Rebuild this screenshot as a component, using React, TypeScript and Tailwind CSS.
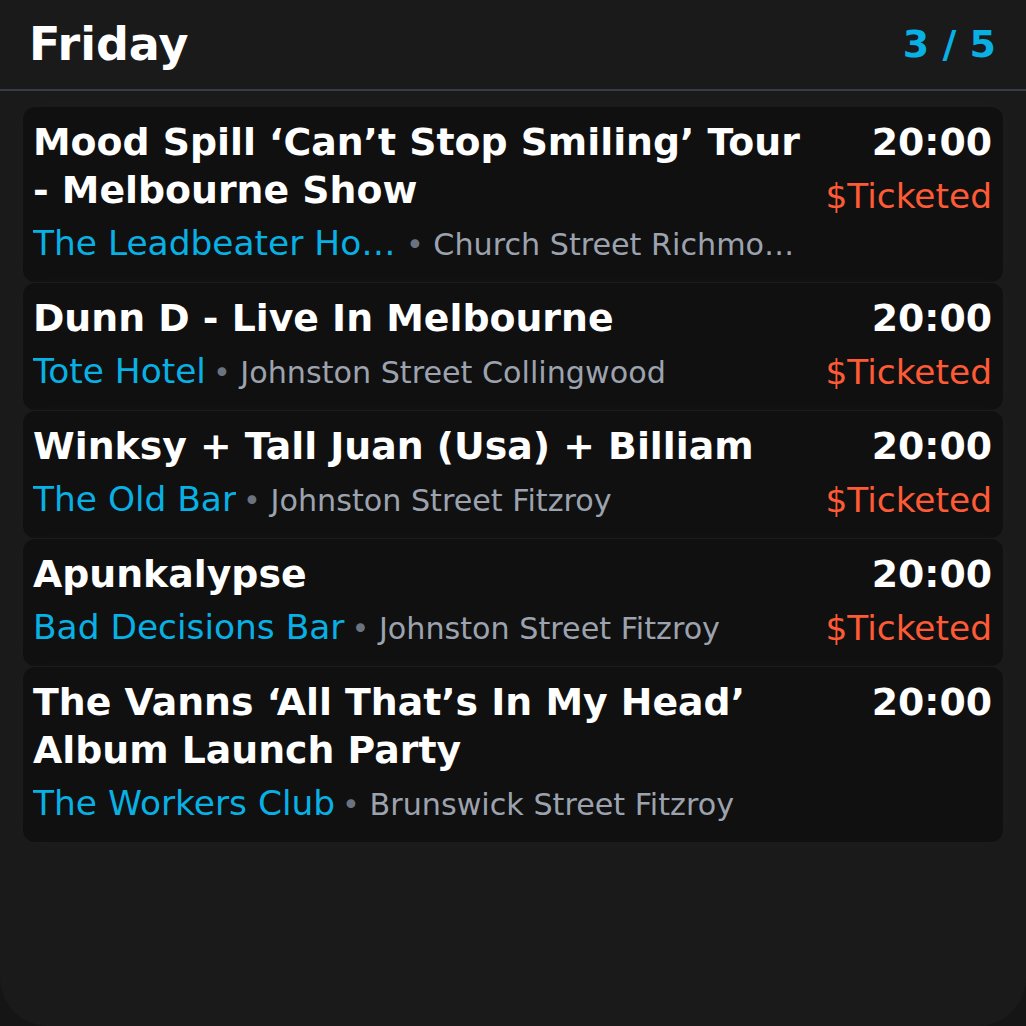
import React from "react";

type Gig = {
  title: string;
  venue: string;
  street: string;
  time: string;
  ticketed: boolean;
};

const gigs: Gig[] = [
  {
    title: "Mood Spill \u2018Can\u2019t Stop Smiling\u2019 Tour - Melbourne Show",
    venue: "The Leadbeater Hotel",
    street: "Church Street Richmond",
    time: "20:00",
    ticketed: true,
  },
  {
    title: "Dunn D - Live In Melbourne",
    venue: "Tote Hotel",
    street: "Johnston Street Collingwood",
    time: "20:00",
    ticketed: true,
  },
  {
    title: "Winksy + Tall Juan (Usa) + Billiam",
    venue: "The Old Bar",
    street: "Johnston Street Fitzroy",
    time: "20:00",
    ticketed: true,
  },
  {
    title: "Apunkalypse",
    venue: "Bad Decisions Bar",
    street: "Johnston Street Fitzroy",
    time: "20:00",
    ticketed: true,
  },
  {
    title: "The Vanns \u2018All That\u2019s In My Head\u2019 Album Launch Party",
    venue: "The Workers Club",
    street: "Brunswick Street Fitzroy",
    time: "20:00",
    ticketed: false,
  },
];

function GigCard({ gig }: { gig: Gig }) {
  return (
    <li className="flex justify-between gap-[18px] rounded-xl bg-[#101010] pt-[11px] pb-[13px] pl-[10px] pr-[11px] shadow-[0_0_22px_rgba(255,255,255,0.025)]">
      <div className="flex min-w-0 flex-1 flex-col">
        <p className="text-[37.8px] font-bold leading-[48px] text-white">
          {gig.title}
        </p>
        <div className="mt-[5px] flex min-w-0 items-baseline pr-[12px] leading-[49px]">
          <span className="truncate text-[34.4px] text-[#08b0e4]">
            {gig.venue}
          </span>
          <span className="ml-[7px] truncate text-[30.2px] text-[#9ca3af]">
            <span className="text-[#6b7280]">{"\u2022"}</span> {gig.street}
          </span>
        </div>
      </div>
      <div className="flex shrink-0 flex-col items-end">
        <p className="text-[37.8px] font-bold leading-[48px] text-white">
          {gig.time}
        </p>
        {gig.ticketed && (
          <p className="mt-[6px] text-[34.4px] leading-[49px] text-[#ff5a36]">
            $Ticketed
          </p>
        )}
      </div>
    </li>
  );
}

export default function App() {
  return (
    <div
      className="h-[1026px] w-[1026px] bg-[#151515]"
      style={{ fontFamily: '"DejaVu Sans", sans-serif' }}
    >
      <div className="flex h-full flex-col overflow-hidden rounded-b-[48px] bg-[#1a1a1a]">
        <header className="flex h-[91px] shrink-0 items-center justify-between border-b-2 border-[#383d45] pl-[29px] pr-[30px]">
          <h1 className="text-[46px] font-bold text-white">Friday</h1>
          <span className="text-[38px] font-bold text-[#08b0e4]">3 / 5</span>
        </header>
        <ul className="mx-[23px] mt-[16px] flex flex-col gap-px">
          {gigs.map((g, i) => (
            <GigCard key={i} gig={g} />
          ))}
        </ul>
      </div>
    </div>
  );
}
